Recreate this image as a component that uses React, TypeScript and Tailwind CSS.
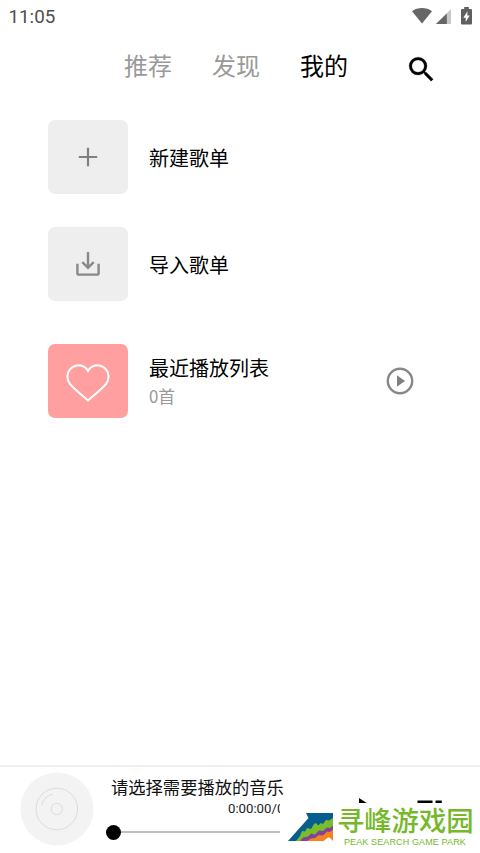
import type { ReactNode } from "react";

type RowProps = {
  icon: ReactNode;
  title: string;
  subtitle?: string;
  tileClass: string;
  action?: ReactNode;
};

function StatusBar() {
  return (
    <div className="flex h-8 items-center justify-between pl-[8.5px] pr-2 text-[#4f4f4f]">
      <span className="mt-px font-['Roboto',sans-serif] text-[18.8px] leading-8">11:05</span>
      <div className="flex items-center">
        <svg className="h-4 w-5" viewBox="0 0 20 16" fill="#666">
          <path d="M0 3.2C5.8-1 14.2-1 20 3.2L10 15.5Z" />
        </svg>
        <svg className="ml-1 h-4 w-4" viewBox="0 0 16 16">
          <path d="M15 1v15H0Z" fill="#c8c8c8" />
          <path d="M10.8 5.4V16H0Z" fill="#666" />
        </svg>
        <svg className="ml-[9px] h-[18px] w-[11px]" viewBox="0 0 11 18">
          <path d="M3.2 0h4.6v2H10a1 1 0 0 1 1 1v13.5a1 1 0 0 1-1 1H1a1 1 0 0 1-1-1V3a1 1 0 0 1 1-1h2.2Z" fill="#5f5f5f" />
          <path d="M6.5 4.2 2.3 10.7h2.4v4.4l4-6.6H6.3Z" fill="#fff" />
        </svg>
      </div>
    </div>
  );
}

function Tabs() {
  return (
    <div className="flex h-[66px] items-center pl-[124px] text-2xl text-[#999]">
      <span className="-mt-px">推荐</span>
      <span className="-mt-px ml-10">发现</span>
      <span className="-mt-px ml-10 text-black">我的</span>
      <svg className="ml-[56.5px] mt-2 h-[33px] w-[33px]" viewBox="0 0 24 24" fill="#000" stroke="#000" strokeWidth=".2">
        <path d="M15.5 14h-.79l-.28-.27A6.47 6.47 0 0 0 16 9.5 6.5 6.5 0 1 0 9.5 16c1.61 0 3.09-.59 4.23-1.57l.27.28v.79l5 4.99L20.49 19l-4.99-5zm-6 0C7.01 14 5 11.99 5 9.5S7.01 5 9.5 5 14 7.01 14 9.5 11.99 14 9.5 14z" />
      </svg>
    </div>
  );
}

function Row({ icon, title, subtitle, tileClass, action }: RowProps) {
  return (
    <div className="flex items-center pl-12 pr-[66px]">
      <div className={`flex h-[74px] w-20 shrink-0 items-center justify-center rounded-[7px] ${tileClass}`}>
        {icon}
      </div>
      <div className="ml-[21px] flex-1 pt-0.5">
        <p className="text-xl leading-7 text-black">{title}</p>
        {subtitle && <p className="text-[16.8px] leading-7 text-[#999]">{subtitle}</p>}
      </div>
      {action}
    </div>
  );
}

function Disc() {
  return (
    <svg className="h-[74px] w-[74px] shrink-0" viewBox="0 0 74 74" fill="none" stroke="#dcdcdc">
      <circle cx="37" cy="37" r="36.5" fill="#f3f3f3" stroke="none" />
      <circle cx="36.8" cy="37" r="20.8" />
      <circle cx="36.8" cy="37" r="5.6" />
      <path d="M21.5 33.5a16 16 0 0 1 11-11.5" />
    </svg>
  );
}

function Watermark() {
  return (
    <div className="absolute left-[280px] top-[36px] flex h-[52px] w-[200px] bg-white pl-2">
      <svg className="mt-[10px] h-7 w-[45px] shrink-0" viewBox="0 0 45 28">
        <path d="M18 0h27v28H0L20.5 5Z" fill="#075d8d" />
        <path d="M8 28 12 23 14 18 17 18.5 19 15 23 16 26 11 28 10 30 12.5 33 10 35 11 38 7 41 7.5 45 5V28Z" fill="#79bd2b" />
        <path d="M12 28 15 24.5 20 23.5 23 20.5 27 21.5 31 17.5 35 18 39 14.5 42 15 45 12.5V28Z" fill="#844299" />
        <path d="M19 28 23 25.5 27 25 31 22 35 22.5 39 18.5 42 19 45 16.5V28Z" fill="#f58220" />
        <path d="m35.5 28 4.5-3.5h1.5L45 28Z" fill="#fff" />
      </svg>
      <div className="ml-1 flex flex-col whitespace-nowrap text-[#76b82a]">
        <p className="mt-[3px] text-[27.3px] font-medium leading-[27px]">寻峰游戏园</p>
        <p className="ml-[7px] mt-1 font-['Liberation_Sans',sans-serif] text-[9px] leading-[10px] tracking-[0.12px]">
          PEAK SEARCH GAME PARK
        </p>
      </div>
    </div>
  );
}

function Player() {
  return (
    <div className="relative flex h-[88px] overflow-hidden border-t-2 border-[#f0f0f0] pl-5 pt-[5px]">
      <Disc />
      <div className="ml-3 w-[174px]">
        <p className="ml-[5px] mt-[3px] whitespace-nowrap text-[17.3px] leading-6 text-[#111]">请选择需要播放的音乐</p>
        <p className="ml-[122px] mt-px whitespace-nowrap font-['Roboto',sans-serif] text-[13.2px] leading-[17px] text-[#222]">
          0:00:00/0
        </p>
        <div className="mt-[7px] flex h-4 items-center">
          <div className="h-[15px] w-[15px] shrink-0 rounded-full bg-black" />
          <div className="h-0.5 flex-1 bg-[#bdbdbd]" />
        </div>
      </div>
      <svg className="ml-[79px] mt-[26px] h-[22px] w-[18px]" viewBox="0 0 18 22">
        <path d="M0 0 17 11 0 22Z" />
      </svg>
      <svg className="ml-[40px] mt-7 h-5 w-7" viewBox="0 0 28 20">
        <path d="M.5.6h15v2.6H.5ZM0 8h15v2H0ZM0 15h10v2H0ZM18.5.6h6.3v2.6h-4.3V16h-2Z" />
      </svg>
      <Watermark />
    </div>
  );
}

export default function App() {
  return (
    <div className="flex h-[853px] w-[480px] flex-col overflow-hidden bg-white font-['Noto_Sans_CJK_SC',sans-serif]">
      <StatusBar />
      <Tabs />
      <main className="flex-1 pt-[22px]">
        <Row
          title="新建歌单"
          tileClass="bg-[#eee]"
          icon={
            <svg className="h-5 w-5" viewBox="0 0 20 20" stroke="#808080" strokeWidth="2.2">
              <path d="M10 .8v18.4M.8 10h18.4" />
            </svg>
          }
        />
        <div className="mt-[33px]">
          <Row
            title="导入歌单"
            tileClass="bg-[#eee]"
            icon={
              <svg className="h-6 w-6" viewBox="0 0 24 24" fill="none" stroke="#888" strokeWidth="2.4">
                <path d="M12 0v15.5M6.3 10.2l5.7 5.7 5.7-5.7M1.4 11.8V21.6q0 1 1 1h19.2q1 0 1-1V11.8" />
              </svg>
            }
          />
        </div>
        <div className="mt-[43px]">
          <Row
            title="最近播放列表"
            subtitle="0首"
            tileClass="bg-[#ff9f9f]"
            icon={
              <svg className="mt-1 h-10 w-11" viewBox="0 0 46 40" fill="none" stroke="#fff" strokeWidth="2.1">
                <path d="M23 7.5C19.5 1 12 .2 7 3.4.8 7.4-.2 15.5 4.3 21.2 8.5 26.4 17 33 23 38.4 29 33 37.5 26.4 41.7 21.2 46.2 15.5 45.2 7.4 39 3.4 34 .2 26.5 1 23 7.5Z" />
              </svg>
            }
            action={
              <svg className="h-7 w-7" viewBox="0 0 28 28">
                <circle cx="14" cy="14" r="12.2" fill="none" stroke="#888" strokeWidth="2.4" />
                <path d="M11 8.3v11.4l8-5.7Z" fill="#808080" />
              </svg>
            }
          />
        </div>
      </main>
      <Player />
    </div>
  );
}
